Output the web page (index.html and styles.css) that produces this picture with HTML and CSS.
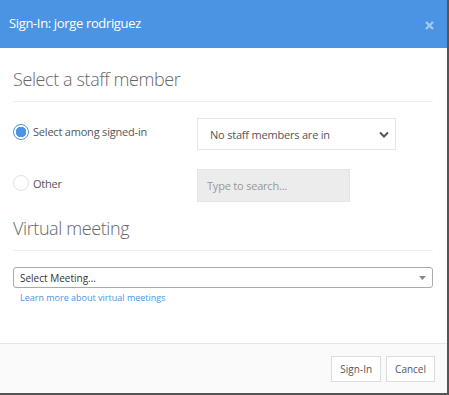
FILE: index.html
```html
<html>
<head>
	<link rel="stylesheet" href="styles.css">
</head>
<body>

	<div class="modal">
		<div class="modal-header">
			<span class="modal-title">Sign-In: jorge rodriguez</span>
			<svg class="close" width="9" height="9" viewBox="0 0 9 9"><path d="M1 1 L8 8 M8 1 L1 8" stroke="#a8c8f0" stroke-width="2.2"/></svg>
		</div>

		<div class="modal-body">
			<h2 class="section-title">Select a staff member</h2>

			<div class="row first">
				<label class="choice"><span class="radio checked"></span>Select among signed-in</label>
				<div class="staff-select">
					<span>No staff members are in</span>
					<svg width="10" height="7" viewBox="0 0 10 7"><path d="M1 1.5 L5 5.5 L9 1.5" fill="none" stroke="#555" stroke-width="2"/></svg>
				</div>
			</div>

			<div class="row">
				<label class="choice"><span class="radio"></span>Other</label>
				<div class="search">Type to search...</div>
			</div>

			<h2 class="section-title second">Virtual meeting</h2>

			<div class="meeting-select">
				<span>Select Meeting...</span>
				<svg width="7" height="4" viewBox="0 0 7 4"><path d="M0 0 L7 0 L3.5 4 Z" fill="#888"/></svg>
			</div>
			<a class="learn" href="#">Learn more about virtual meetings</a>
		</div>

		<div class="modal-footer">
			<button class="btn">Sign-In</button>
			<button class="btn">Cancel</button>
		</div>
	</div>

</body>
</html>
```

FILE: styles.css
```css
body {
	margin: 0;
	background: #555;
	font-family: "Open Sans", "Noto Sans", sans-serif;
	color: #555;
	width: 449px;
	height: 395px;
	overflow: hidden;
}

.modal {
	width: 447px;
	height: 393px;
	background: #fff;
	display: flex;
	flex-direction: column;
}

.modal-header {
	height: 48px;
	flex: none;
	background: #4a94e3;
	display: flex;
	align-items: center;
	justify-content: space-between;
	padding: 0 13px 0 9px;
}
.modal-title {
	color: #fff;
	font-size: 13px;
	letter-spacing: -0.35px;
	margin-top: -2px;
}
.close {
	margin-top: 2px;
}

.modal-body {
	flex: 1;
	padding: 0 14px 0 13px;
}

.section-title {
	margin: 19px 0 0;
	font-size: 18px;
	font-weight: 300;
	letter-spacing: -0.4px;
	line-height: 24px;
	color: #666;
	padding-bottom: 10px;
	border-bottom: 1px solid #eee;
}
.section-title.second {
	margin-top: 14px;
}

.row {
	display: flex;
	align-items: center;
	margin-top: 19px;
}
.row.first {
	margin-top: 16px;
}

.choice {
	width: 184px;
	display: flex;
	align-items: center;
	font-size: 11px;
	letter-spacing: -0.2px;
	color: #555;
	padding-bottom: 5px;
}
.radio {
	width: 16px;
	height: 16px;
	box-sizing: border-box;
	border: 1px solid #e2e2e2;
	border-radius: 50%;
	margin-right: 4px;
	background: #fff;
}
.radio.checked {
	border-color: #4a94e3;
	background: radial-gradient(circle, #4a94e3 0, #4a94e3 5px, #fff 5.5px);
}

.staff-select {
	width: 199px;
	height: 32px;
	box-sizing: border-box;
	border: 1px solid #e5e5e5;
	display: flex;
	align-items: center;
	justify-content: space-between;
	padding: 0 6px 0 12px;
	font-size: 11px;
	letter-spacing: -0.2px;
	color: #555;
}

.search {
	width: 153px;
	height: 33px;
	box-sizing: border-box;
	background: #ececec;
	border: 1px solid #e5e5e5;
	display: flex;
	align-items: center;
	padding-left: 9px;
	font-size: 11px;
	letter-spacing: -0.2px;
	color: #999;
}

.meeting-select {
	margin-top: 16px;
	height: 21px;
	box-sizing: border-box;
	border: 1px solid #aaa;
	border-radius: 3px;
	display: flex;
	align-items: center;
	justify-content: space-between;
	padding: 0 6px 0 6px;
	font-size: 10px;
	color: #333;
}

.learn {
	display: block;
	margin: 3px 0 0 7px;
	font-size: 9px;
	color: #4a94e3;
	text-decoration: none;
}

.modal-footer {
	height: 49px;
	flex: none;
	border-top: 1px solid #e5e5e5;
	background: #fafafa;
	display: flex;
	align-items: center;
	justify-content: flex-end;
	gap: 5px;
	padding-right: 12px;
}
.btn {
	height: 26px;
	background: #fff;
	border: 1px solid #ddd;
	font-family: "Open Sans", "Noto Sans", sans-serif;
	font-size: 10px;
	color: #555;
	padding: 0 8px;
}
```
